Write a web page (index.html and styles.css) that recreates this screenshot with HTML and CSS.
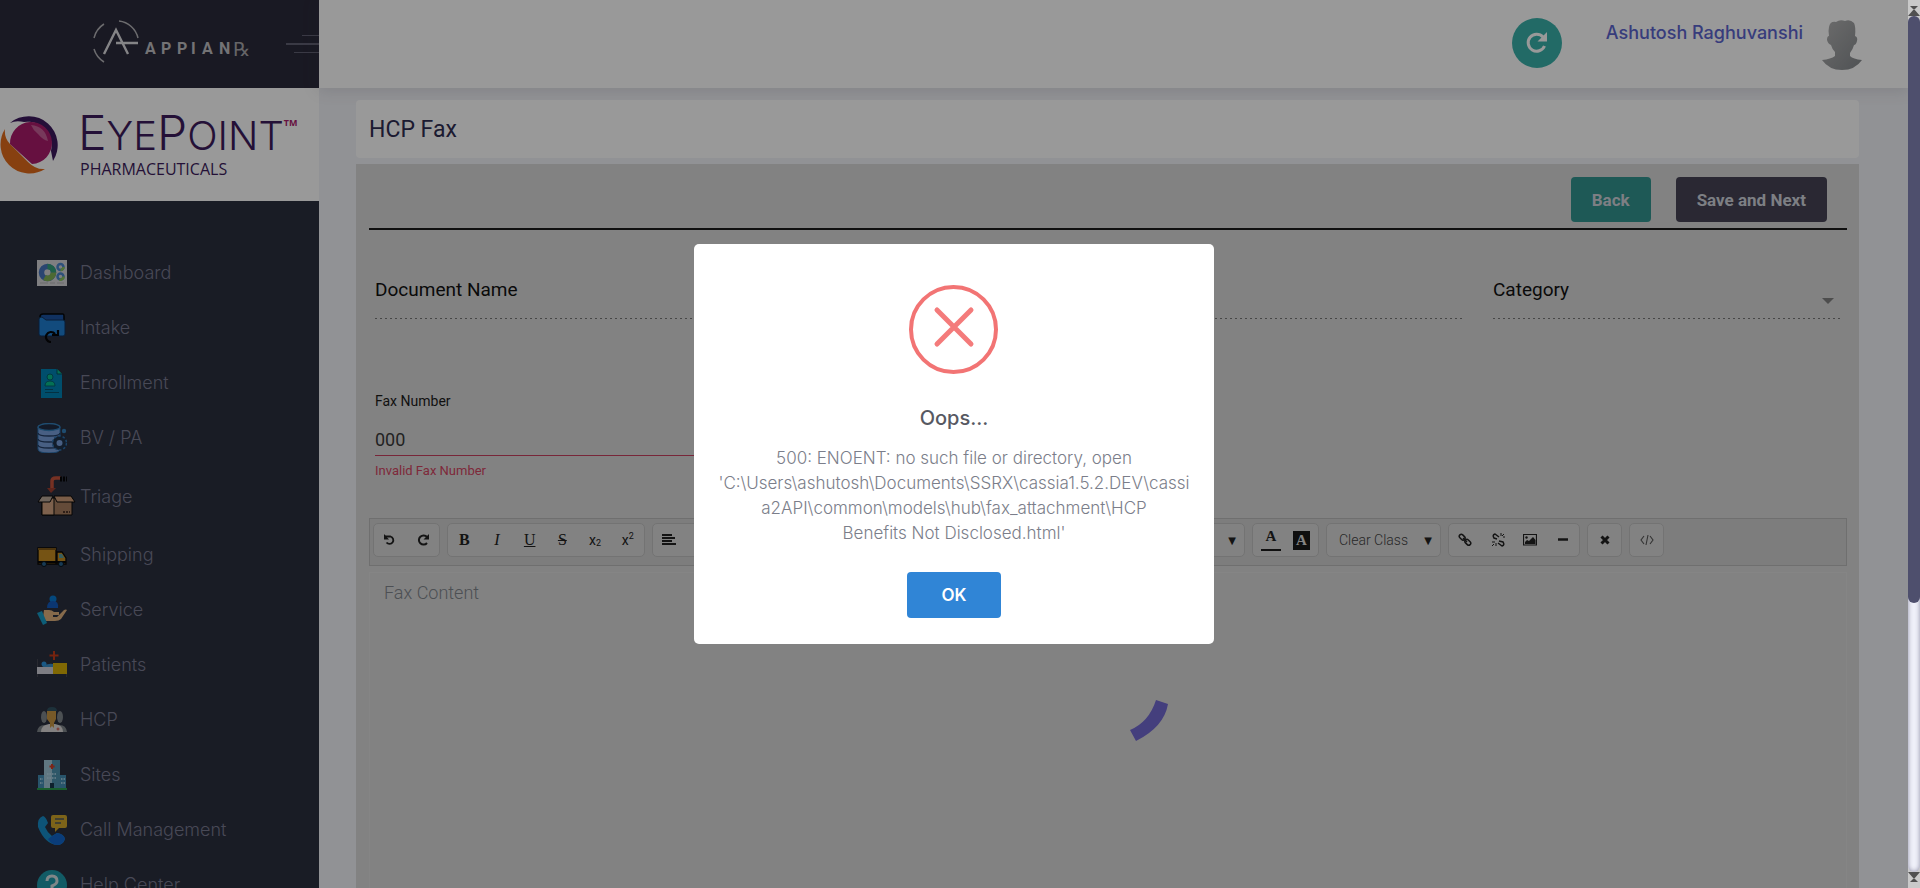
FILE: index.html
```html
<!DOCTYPE html>
<html lang="en">
<head>
<meta charset="utf-8">
<title>HCP Fax</title>
<link rel="stylesheet" href="styles.css">
</head>
<body>
<div class="app">
  <div class="page">
    <aside class="sidebar">
      <div class="brand">
        <svg class="brand-logo" width="160" height="50" viewBox="0 0 160 50" role="img" aria-label="Appian Rx">
          <g fill="none" stroke="#b4b4b8" stroke-width="1.5">
            <path d="M1 19 A23 23 0 0 1 11 5M26 2 A22 22 0 0 1 45 19M1 30 A23 23 0 0 0 11 43"/>
            <path d="M11 35 L23 11 L35 35M23 24 H45" stroke="#dddde0" stroke-width="2.4"/>
          </g>
          <text class="brand-name" y="35" x="52 68 84 98 109 126">APPIAN</text>
          <text class="brand-rx" x="140" y="37">℞</text>
        </svg>
        <button class="menu-toggle" aria-label="Toggle menu"><span></span><span></span><span></span></button>
      </div>
      <div class="client">
        <svg width="58" height="58" viewBox="0 0 58 58" aria-hidden="true">
          <circle cx="29" cy="29" r="29" fill="#fff"/>
          <path d="M10 7A29 29 0 0 1 53 45L51 35A24 24 0 0 0 24 6Q16 4 10 7Z" fill="#3d1a5e"/>
          <path d="M5 13A29 29 0 0 0 45 53Q36 54 28 46L10 28Q4 22 5 13Z" fill="#e16c1c"/>
          <path d="M10 28A21 21 0 1 1 32 48Z" fill="#ab1c6c"/>
          <path d="M31 9Q45 10 48 25Q43 24 38 18Q33 14 31 9Z" fill="#c76098"/>
        </svg>
        <div class="client-text">
          <div class="client-name"><span class="big">E</span>YE<span class="big">P</span>OINT<sup>TM</sup></div>
          <div class="client-sub">PHARMACEUTICALS</div>
        </div>
      </div>
      <nav class="nav">
        <a href="#"><svg viewBox="0 0 30 30"><path fill="#d4d4d8" d="M0 2h30v26H0z"/><circle cx="10.500" cy="14.500" r="6" fill="none" stroke="#4774bd" stroke-width="5.500"/><path d="M10.500 8.500a6 6 0 0 1 6 6" fill="none" stroke="#35a17b" stroke-width="5.500"/><path d="M16.500 14.500a6 6 0 0 1-9 5" fill="none" stroke="#80b155" stroke-width="5.500"/><g fill="none" stroke-width="2.500"><circle cx="23.500" cy="9" r="3" stroke="#4c86cc"/><path d="M26.500 9a3 3 0 0 1-3 3" stroke="#8bc45a"/><circle cx="23.500" cy="18.500" r="3" stroke="#4c86cc"/><path d="M26.500 18.500a3 3 0 0 1-4 3" stroke="#8bc45a"/></g><path d="M3 25h8m2 0h5m2 0h7" stroke="#b2b2b6"/></svg>Dashboard</a>
        <a href="#"><svg viewBox="0 0 30 30"><path d="M3 4q0-3 3-3h20q1 0 1 2v6H3z" fill="#1b53a0" stroke="#050608" stroke-width="1.500"/><path d="M2 6q0-2 3-2l4 3h17q2 0 2 2v12q0 2-2 2H4q-2 0-2-2z" fill="#1e7ed0" stroke="#10335e"/><path d="M14 29a5 5 0 1 1 4-8M21 17v5h-6" fill="none" stroke="#050608" stroke-width="2.200"/></svg>Intake</a>
        <a href="#"><svg viewBox="0 0 30 30"><path d="M4 1h16l5 5v24H4z" fill="#0082b4"/><path d="M20 1v5h5" fill="#08bd8c" stroke="#064e5e"/><circle cx="13" cy="9" r="3" fill="#08bd8c" stroke="#046070"/><path d="M8 18q0-5 5-5t5 5z" fill="#08bd8c" stroke="#046070"/><path d="M8 21.500h8M8 24.500h14" stroke="#07526e"/></svg>Enrollment</a>
        <a href="#"><svg viewBox="0 0 30 30"><path d="M1 4v22q0 4 11 4t11-4V4z" fill="#799fda" stroke="#286fae"/><ellipse cx="12" cy="4" rx="11" ry="3.500" fill="#202c44" stroke="#347fba" stroke-width="1.300"/><path d="M1 10q0 3 11 3t11-3M1 16q0 3 11 3t11-3M1 22q0 3 11 3t11-3" fill="none" stroke="#243e65" stroke-width="1.300"/><circle cx="22.500" cy="20" r="5" fill="#799fda" stroke="#1e3149" stroke-width="4"/><circle cx="22.500" cy="20" r="7" fill="none" stroke="#2e71ae" stroke-width="1.500" stroke-dasharray="2.500 2"/><circle cx="27" cy="8" r="2.200" fill="#347fba"/></svg>BV / PA</a>
        <a href="#" class="tall"><svg viewBox="0 0 40 40"><path d="M15 13V5q0-3 4-3h5" fill="none" stroke="#c5533b" stroke-width="3.500"/><path d="M10 12h9l-5 5z" fill="#9e3f30"/><path d="M23 3h7" stroke="#050608" stroke-width="5" stroke-dasharray="2 1"/><path d="M5 22h30v17H5z" fill="#a77e60" stroke="#090808"/><path d="M5 22h12v17H5z" fill="#d0a280" stroke="#090808"/><path d="M5 20h11l-3 6H1z" fill="#b7a798" stroke="#090808"/><path d="M17 20h17l4 6H20z" fill="#cc9b78" stroke="#090808"/><path d="M26 36h7" stroke="#4e3528" stroke-width="2" stroke-dasharray="2 1"/></svg>Triage</a>
        <a href="#"><svg viewBox="0 0 30 30"><path d="M1 8h18v16H1z" fill="#c38a22" stroke="#080706" stroke-width="1.300"/><path d="M1 8h18v2H1z" fill="#7e5718"/><path d="M20 12h5l4 6v6h-9z" fill="#c38a22" stroke="#080706" stroke-width="1.300"/><path d="M22 14h3l2 4h-5z" fill="#5a9d9f"/><path d="M1 22h28" stroke="#090807" stroke-width="2"/><circle cx="7" cy="24" r="2.500" fill="#28618b" stroke="#071016"/><circle cx="24" cy="24" r="2.500" fill="#28618b" stroke="#071016"/></svg>Shipping</a>
        <a href="#"><svg viewBox="0 0 30 30"><circle cx="16" cy="4" r="3.500" fill="#0879d1"/><path d="M10 13Q10 6 16 6t5 7z" fill="#135bbd"/><path d="M7 15h5q3 0 5 2h5v3h-6v2h4l7-7q2-1 3 0l-6 9q-2 2-6 2H9l-3-4z" fill="#dfb17e"/><path d="M0 18l5-2 5 12-4 2z" fill="#169bc6"/></svg>Service</a>
        <a href="#"><svg viewBox="0 0 30 30"><path d="M17 1v9M12.500 5.500h9" stroke="#c43b19" stroke-width="2"/><path d="M0 9v18M30 19v8" stroke="#5d5d62"/><path d="M0 17h17v7H0z" fill="#d0d1db"/><path d="M16 13h14v11H16z" fill="#d6ad08"/><circle cx="7" cy="14" r="2.500" fill="#2b95df"/><path d="M5 17q5-4 11-3v3z" fill="#398ec9"/></svg>Patients</a>
        <a href="#"><svg viewBox="0 0 30 30"><g fill="#7f858a"><ellipse cx="7" cy="12" rx="3" ry="6"/><ellipse cx="23" cy="12" rx="3" ry="6"/><path d="M0 27q1-8 9-7h12q8-1 9 7z"/></g><path d="M10 6q0-4 5-4t5 4z" fill="#315262"/><path d="M4 27q0-7 8-8h6q8 1 8 8z" fill="#dad8d8"/><path d="M10 6h9v8l-2 4v5l-2-2-2 2v-5l-3-4z" fill="#c79544"/><path d="M21 22.500v3M19.500 24h3" stroke="#ce4a3d"/></svg>HCP</a>
        <a href="#"><svg viewBox="0 0 30 30"><path d="M1 15h28v14H1z" fill="#438cb3"/><path d="M7 0h8v29H7z" fill="#a0c7d8"/><path d="M15 0h8v29h-8z" fill="#4d91ae"/><path d="M15 4v5M12.500 6.500h5" stroke="#ce3f27" stroke-width="2"/><path d="M3 19h3M3 23h3M10 14h10M10 18h10M24 19h4M24 23h4" stroke="#b9dceb" stroke-width="1.500" stroke-dasharray="1.500 1"/><path d="M13 23h4v6h-4z" fill="#18374b"/><path d="M0 29h30" stroke="#2a9d4e" stroke-width="2"/></svg>Sites</a>
        <a href="#"><svg viewBox="0 0 30 30"><path d="M6 1q3 1 5 7l-3 4q2 5 7 9l5-3q7 1 8 6-2 6-8 6Q8 29 1 12 0 3 6 1z" fill="#178cc8"/><path d="M15 21l5-3q7 1 8 6-2 6-8 6-5 0-9-6z" fill="#1265ca"/><path d="M16 0h12q2 0 2 2v9q0 2-2 2h-6l-4 4v-4h-2q-2 0-2-2V2q0-2 2-2z" fill="#cfa52a"/><path d="M18 4h9M18 8h6" stroke="#4e5961" stroke-width="1.500"/></svg>Call Management</a>
        <a href="#"><svg viewBox="0 0 30 30"><circle cx="15" cy="15" r="15" fill="#1e98a9"/><path d="M10 11q0-5 5-5t5 5q0 3-5 5v3m0 3v3" fill="none" stroke="#d4e0e3" stroke-width="3"/></svg>Help Center</a>
      </nav>
    </aside>

    <div class="main">
      <header class="topbar">
        <button class="refresh" aria-label="Refresh"><svg width="22" height="22" viewBox="0 0 22 22"><path d="M18.500 14A8.500 8.500 0 1 1 17 5" fill="none" stroke="#fff" stroke-width="3"/><path d="M21 0v9.500h-9.500z" fill="#fff"/></svg></button>
        <a href="#" class="user">Ashutosh Raghuvanshi</a>
        <svg class="avatar" width="40" height="52" viewBox="0 0 40 52" role="img" aria-label="Profile"><defs><linearGradient id="shade" x1="0" y1="0" x2="1" y2="1"><stop offset="0" stop-color="#b4b4b4"/><stop offset="1" stop-color="#85898d"/></linearGradient></defs><path fill="url(#shade)" d="M7 9Q8 3 14 4q4-3 9-1 5-2 9 2 2 4 1 13 3 1 2 5-1 4-3 4-1 4-4 8v3q3 3 12 4-7 10-20 10T0 42q9-1 13-4v-4q-3-3-4-7-3-1-4-5 0-4 2-4-1-5 0-9z"/></svg>
      </header>

      <main class="content">
        <h1 class="card-title">HCP Fax</h1>
        <section class="panel">
          <div class="actions">
            <button class="btn btn-back">Back</button>
            <button class="btn btn-save">Save and Next</button>
          </div>
          <form class="form">
            <div class="row">
              <input class="field" type="text" placeholder="Document Name" aria-label="Document Name">
              <div class="select-wrap">
                <select class="field" aria-label="Category"><option>Category</option></select>
                <i class="arrow"></i>
              </div>
            </div>
            <div class="fax">
              <label for="fax">Fax Number</label>
              <input id="fax" type="text" value="000">
              <p class="error">Invalid Fax Number</p>
            </div>
          </form>
          <div class="toolbar">
            <div class="group g2">
              <button aria-label="Undo"><svg viewBox="0 0 14 14"><path d="M2 3.500h5.500a3.800 3.800 0 1 1-4 6" fill="none" stroke="#222" stroke-width="1.800"/><path d="M1 1v5.500h5z" fill="#222"/></svg></button>
              <button aria-label="Redo"><svg viewBox="0 0 14 14"><path d="M11 10a4.600 4.600 0 1 1 0-6" fill="none" stroke="#222" stroke-width="2"/><path d="M13 1v5.500H7.500z" fill="#222"/></svg></button>
            </div>
            <div class="group g6">
              <button class="serif"><b>B</b></button><button class="serif"><em>I</em></button><button class="serif"><u>U</u></button><button class="serif"><s>S</s></button><button class="script">x<sub>2</sub></button><button class="script">x<sup>2</sup></button>
            </div>
            <div class="group g7">
              <button aria-label="Align left"><svg viewBox="0 0 14 14"><path d="M0 2h10M0 5h13M0 8h10M0 11h14" stroke="#222" stroke-width="1.800"/></svg></button>
            </div>
            <div class="group font"><select aria-label="Font"><option></option></select><span class="caret">▼</span></div>
            <div class="group g2">
              <button class="ink" aria-label="Text color">A</button><button class="paper" aria-label="Background color"><span>A</span></button>
            </div>
            <div class="group clear"><select aria-label="Custom class"><option>Clear Class</option></select><span class="caret">▼</span></div>
            <div class="group g4">
              <button aria-label="Insert link"><svg viewBox="0 0 14 14" fill="none" stroke="#222" stroke-width="1.500"><rect x="1" y="2" width="6.500" height="4" rx="2" transform="rotate(45 4 4)"/><rect x="6.500" y="7.500" width="6.500" height="4" rx="2" transform="rotate(45 10 9.500)"/><path d="M5 5l4 4"/></svg></button>
              <button aria-label="Unlink"><svg viewBox="0 0 14 14" fill="none" stroke="#222" stroke-width="1.500"><path d="M6 6L3 5Q1 2 4 1l4 3M8 8l4 1q2 3-1 4L7 10"/><path d="M1 9h3M5 10v3M3 11l-2 2M10 0v3M12 4h2M11 3l2-2" stroke-width="1"/></svg></button>
              <button aria-label="Insert image"><svg viewBox="0 0 14 14"><path d="M.500 1.500h13v10.500H.500z" fill="none" stroke="#222" stroke-width="1.200"/><circle cx="3.500" cy="4.500" r="1.200" fill="#222"/><path d="M2 11V9l2-2 2 1 4-4 2.500 3v4z" fill="#222"/></svg></button>
              <button aria-label="Horizontal line"><svg viewBox="0 0 14 14"><path d="M2 6.500h10" stroke="#222" stroke-width="2.500"/></svg></button>
            </div>
            <div class="group g1"><button aria-label="Clear formatting"><svg viewBox="0 0 14 14"><path d="M3.500 3.500l7 7m0-7l-7 7" stroke="#222" stroke-width="3"/></svg></button></div>
            <div class="group g1"><button aria-label="Source code"><svg viewBox="0 0 14 14"><path d="M4 3L1 7l3 4M10 3l3 4-3 4M8 2L6 12" fill="none" stroke="#555" stroke-width="1.100"/></svg></button></div>
          </div>
          <textarea class="editor" placeholder="Fax Content" aria-label="Fax Content"></textarea>
        </section>
      </main>
      <svg class="spinner" width="40" height="42" viewBox="0 0 40 42" aria-hidden="true"><path d="M27 0L39 4Q35 27 7 41L1 30Q20 22 27 0Z" fill="#7269d0"/></svg>
    </div>
  </div>

  <div class="scrollbar" aria-hidden="true">
    <svg width="12" height="16" viewBox="0 0 12 16"><path d="M2 6h8L6 10zM0 16h12L6 9z" fill="#505050"/></svg>
    <div class="track"><div class="thumb"></div></div>
    <svg width="12" height="16" viewBox="0 0 12 16"><path d="M0 0h12L6 7zM2 10h8L6 6z" fill="#505050"/></svg>
  </div>

  <div class="overlay">
    <div class="modal" role="alertdialog" aria-labelledby="modal-title" aria-describedby="modal-text">
      <svg width="90" height="89" viewBox="0 0 90 89" aria-hidden="true"><circle cx="44.500" cy="44.500" r="42.500" fill="none" stroke="#f27474" stroke-width="4"/><path d="M28 25L62 59M62 25L28 59" stroke="#f47b7b" stroke-width="5" stroke-linecap="round"/></svg>
      <h2 id="modal-title">Oops...</h2>
      <p id="modal-text">500: ENOENT: no such file or directory, open<br>'C:\Users\ashutosh\Documents\SSRX\cassia1.5.2.DEV\cassi<br>a2API\common\models\hub\fax_attachment\HCP<br>Benefits Not Disclosed.html'</p>
      <button class="ok">OK</button>
    </div>
  </div>
</div>
</body>
</html>
```
FILE: styles.css
```css
* { box-sizing: border-box; }
body {
  margin: 0;
  font-family: Roboto, "Liberation Sans", sans-serif;
  background: #f2f3f8;
}
button, input, select, textarea { font: inherit; color: inherit; }
button { padding: 0; border: 0; background: none; cursor: pointer; }
a { text-decoration: none; }

.app { display: flex; height: 100vh; overflow: hidden; }
.page { display: flex; flex: 1; min-width: 0; }

.sidebar {
  width: 319px;
  flex: none;
  overflow: hidden;
  background: #2b2f3e;
  font-family: Inter, sans-serif;
}
.brand {
  display: flex;
  align-items: center;
  justify-content: space-between;
  height: 88px;
  padding-left: 93px;
  background: #2b2a3b;
}
.brand-logo { overflow: visible; }
.brand-name { font: 700 16px Roboto, sans-serif; fill: #c0c0c4; }
.brand-rx { font: 400 19px "DejaVu Sans", sans-serif; fill: #a8a8ac; }
.menu-toggle { display: flex; flex-direction: column; align-items: flex-end; gap: 7px; }
.menu-toggle span { width: 25px; height: 1px; background: #626174; }
.menu-toggle span:first-child { width: 17px; }
.menu-toggle span:nth-child(2) { width: 33px; height: 2px; }

.client {
  display: flex;
  align-items: center;
  gap: 20px;
  height: 113px;
  background: #fff;
  color: #3d1c5c;
}
.client-text { display: flex; flex-direction: column; gap: 4px; }
.client-name {
  font: 300 40px/42px Inter, sans-serif;
  white-space: nowrap;
}
.client-name .big { font-size: 48px; }
.client-name sup { font: 700 9px/9px "Open Sans", sans-serif; color: #ab1c6c; vertical-align: 24px; }
.client-sub { padding-left: 2px; font: 400 16px/17px "Open Sans", sans-serif; }

.nav { padding-top: 44px; }
.nav a {
  display: flex;
  align-items: center;
  gap: 13px;
  height: 55px;
  padding-left: 37px;
  color: #787a90;
  font-size: 18px;
  font-weight: 300;
}
.nav svg { width: 30px; height: 30px; }
.nav .tall { height: 62px; gap: 3px; }
.nav .tall svg { width: 40px; height: 40px; }

.main { position: relative; flex: 1; min-width: 0; display: flex; flex-direction: column; }
.topbar {
  display: flex;
  align-items: flex-start;
  justify-content: flex-end;
  height: 88px;
  padding: 18px 46px 0 0;
  background: #fff;
  box-shadow: 0 1px 15px 1px rgba(69, 65, 78, 0.15);
}
.refresh {
  display: flex;
  align-items: center;
  justify-content: center;
  width: 50px;
  height: 50px;
  margin-right: 44px;
  border-radius: 50%;
  background: #3ab1aa;
}
.user {
  margin-right: 19px;
  color: #5d65cf;
  font: 500 18px/30px Inter, sans-serif;
}

.content {
  flex: 1;
  display: flex;
  flex-direction: column;
  gap: 6px;
  padding: 12px 49px 0 37px;
}
.card-title {
  margin: 0;
  padding: 15px 13px 13px;
  border-radius: 4px;
  background: #fff;
  color: #2f2d52;
  font-size: 23px;
  font-weight: 400;
  line-height: 30px;
}
.panel {
  flex: 1;
  display: flex;
  flex-direction: column;
  padding: 13px 12px 0 13px;
  background: #d9d9d9;
}
.actions {
  display: flex;
  justify-content: flex-end;
  gap: 25px;
  padding: 0 20px 6px 0;
  border-bottom: 2px solid #1c1c1c;
}
.btn {
  height: 45px;
  padding: 0 21px;
  border-radius: 4px;
  color: #d0d4dc;
  font-size: 17px;
  font-weight: 700;
}
.btn-back { background: #32958f; }
.btn-save { background: #464456; }

.form { padding: 43px 7px 0 6px; }
.row { display: grid; grid-template-columns: 1090fr 347fr; gap: 28px; }
.field {
  width: 100%;
  height: 46px;
  padding: 0 0 14px;
  border: 0;
  border-radius: 0;
  outline: 0;
  appearance: none;
  background: repeating-linear-gradient(90deg, #777 0 2px, transparent 2px 5px) left bottom / 100% 1px no-repeat;
  color: #111;
  font-size: 19px;
}
.field::placeholder { color: #111; }
.select-wrap { position: relative; }
.arrow {
  position: absolute;
  right: 6px;
  top: 25px;
  border: 6px solid transparent;
  border-top-color: #808080;
  border-bottom: 0;
}
.fax { display: flex; flex-direction: column; width: 50%; padding-top: 72px; }
.fax label { color: #1c1c1c; font-size: 14px; line-height: 20px; }
.fax input {
  height: 45px;
  padding: 13px 0 0;
  border: 0;
  border-bottom: 1px solid #c8405f;
  outline: 0;
  background: none;
  color: #3a3a3a;
  font-size: 18px;
}
.error { margin: 5px 0 0; color: #d34562; font-size: 13px; line-height: 20px; }

.toolbar {
  display: flex;
  align-items: flex-start;
  gap: 7px;
  height: 48px;
  margin-top: 37px;
  padding: 4px 3px;
  border: 1px solid #b9b9b9;
  background: #d1d1d1;
}
.group {
  display: flex;
  position: relative;
  height: 34px;
  border: 1px solid #c0c0c0;
  border-radius: 5px;
  background: #d9d9d9;
  color: #222;
}
.group button { flex: 1; display: flex; align-items: center; justify-content: center; }
.group svg { width: 14px; height: 14px; }
.group select {
  width: 100%;
  padding-left: 12px;
  border: 0;
  appearance: none;
  background: none;
  color: #444;
  font-size: 14px;
  font-weight: 300;
}
.caret { position: absolute; right: 8px; top: 9px; font: 10px/16px "DejaVu Sans", sans-serif; }
.g1 { width: 35px; }
.g2 { width: 67px; }
.g4 { width: 132px; }
.g6 { width: 198px; }
.g7 { width: 230px; padding-right: 197px; }
.font { width: 356px; }
.clear { width: 115px; }
.serif { font: 16px "Liberation Serif", serif; }
.script { font: 14px Roboto, sans-serif; }
.script sub, .script sup { font-size: 9px; }
.script sub { align-self: flex-end; padding-bottom: 8px; }
.script sup { align-self: flex-start; padding-top: 7px; }
.ink, .paper { font: 700 15px "Liberation Serif", serif; }
.group .ink { flex: none; width: 20px; height: 27px; margin: 0 4px 0 8px; border-bottom: 2px solid #1c1c1c; }
.paper span { padding: 1px 3px; background: #1a1a1a; color: #ddd; }

.editor {
  flex: 1;
  margin-top: 6px;
  padding: 9px 14px;
  border: 1px solid #dedede;
  border-bottom: 0;
  outline: 0;
  resize: none;
  background: none;
  font-size: 18px;
  font-weight: 300;
}
.editor::placeholder { color: #80858c; }
.spinner { position: absolute; left: calc(50% + 15px); top: 700px; }

.scrollbar {
  position: relative;
  z-index: 3;
  display: flex;
  flex-direction: column;
  width: 12px;
  background: #c9c9c9;
}
.track {
  flex: 1;
  border-radius: 6px;
  background: #f0f1fa;
  box-shadow: inset 0 0 5px #8d8da5;
}
.thumb { height: 68.6%; border-radius: 6px; background: #4e4f6d; }

.overlay {
  position: fixed;
  inset: 0 12px 0 0;
  z-index: 2;
  display: flex;
  align-items: center;
  justify-content: center;
  background: rgba(0, 0, 0, 0.4);
  font-family: Inter, sans-serif;
}
.modal {
  display: flex;
  flex-direction: column;
  align-items: center;
  width: 520px;
  padding: 41px 20px 26px;
  border-radius: 5px;
  background: #fff;
  text-align: center;
}
.modal h2 { margin: 27px 0 0; color: #575962; font-size: 20px; font-weight: 500; line-height: 34px; }
.modal p { margin: 11px 0 26px; color: #7b7e8a; font-size: 17px; font-weight: 300; line-height: 25px; white-space: nowrap; }
.ok {
  width: 94px;
  height: 46px;
  border-radius: 4px;
  background: #3085d6;
  color: #fff;
  font-size: 17px;
  font-weight: 600;
}
```
